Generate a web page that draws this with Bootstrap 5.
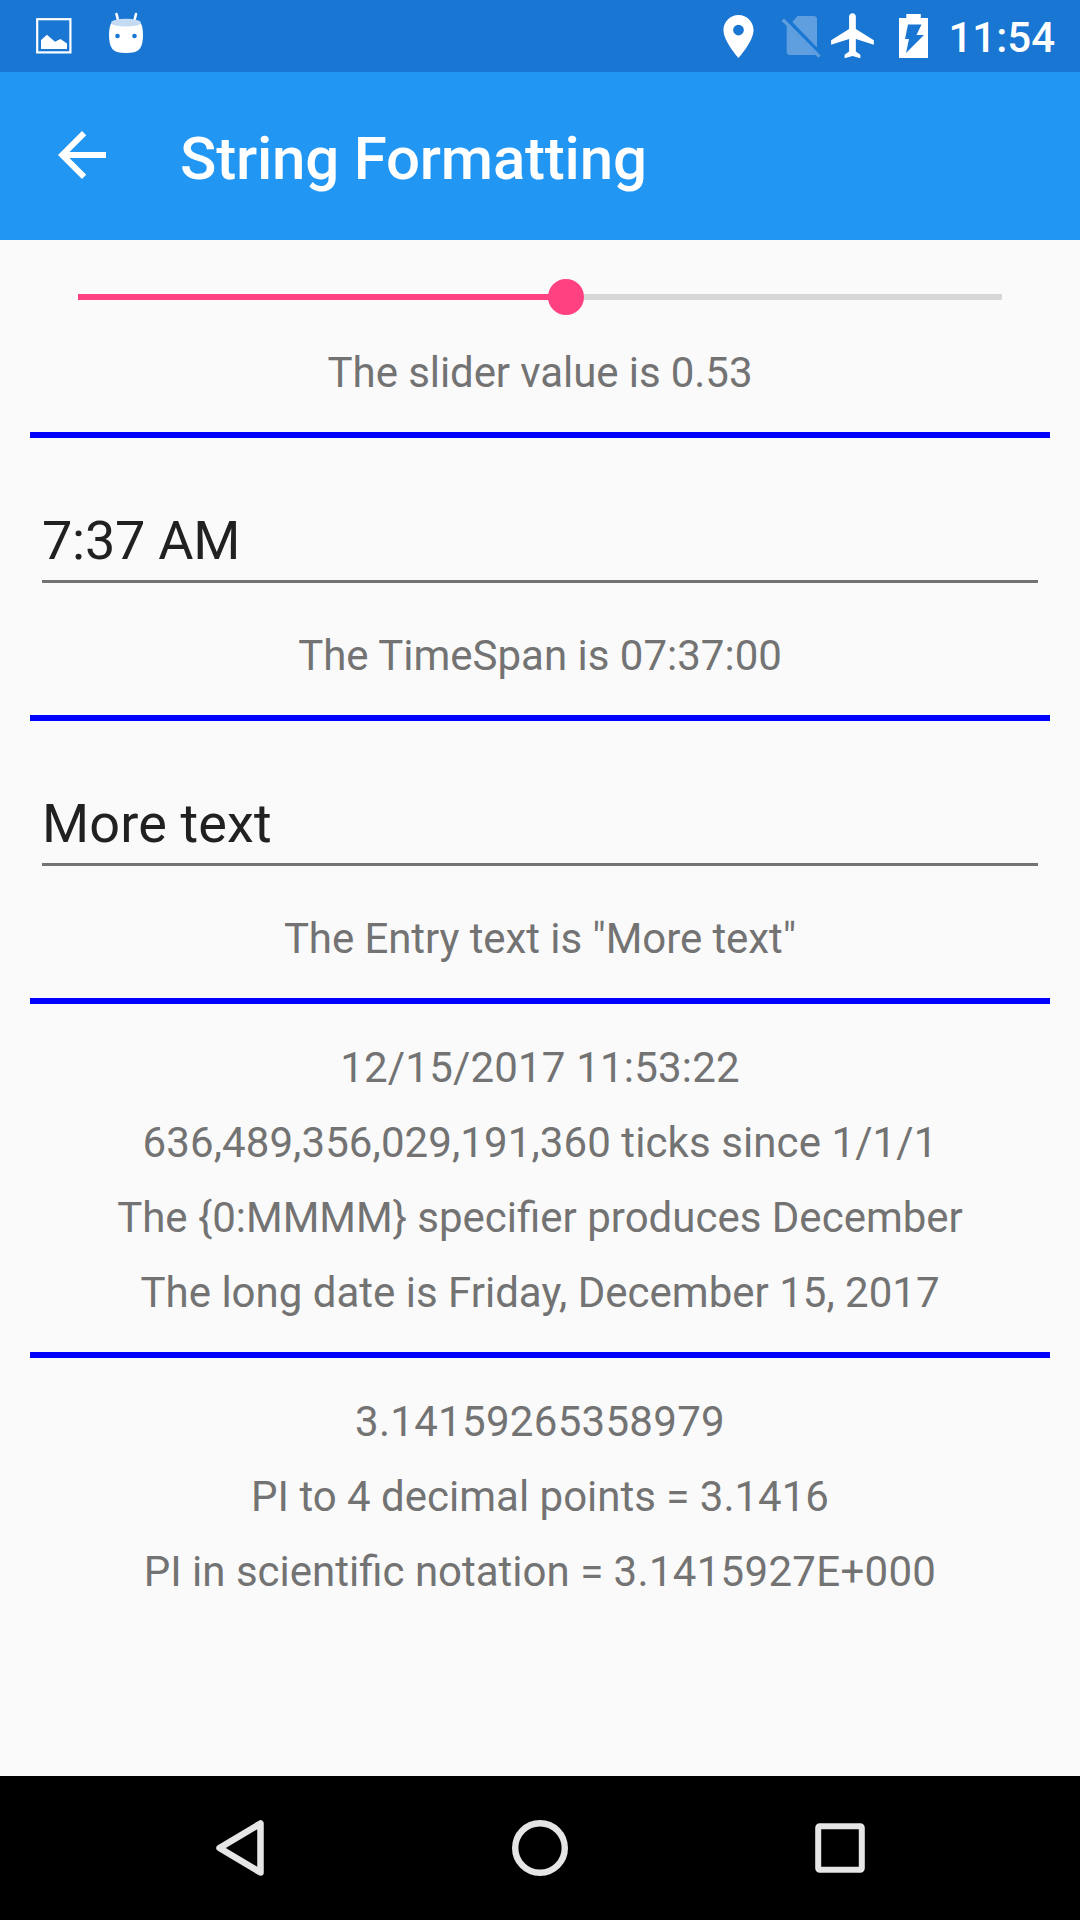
<!DOCTYPE html>
<html lang="en">
<head>
<meta charset="utf-8">
<meta name="viewport" content="width=device-width, initial-scale=1">
<title>String Formatting</title>
<link href="https://cdn.jsdelivr.net/npm/bootstrap@5.3.0/dist/css/bootstrap.min.css" rel="stylesheet">
<style>
  body { font-family: Roboto, "Noto Sans", sans-serif; background: #fafafa; color: #737373; }
  svg { display: block; flex: none; }
  .screen { height: 1920px; width: 1080px; overflow: hidden; }
  .status-bar { height: 72px; background: #1976d2; padding: 0 25px 0 36px; }
  .status-icons { gap: 36px; }
  .clock { font-size: 42px; font-weight: 500; line-height: 49px; padding-top: 3px; margin-left: 20px; }
  .app-bar { height: 168px; background: #2196f3; padding: 0 46px; }
  .app-bar svg { margin-bottom: 2px; }
  .app-title { font-size: 60px; font-weight: 500; line-height: 70px; padding-top: 5px; margin-left: 62px; letter-spacing: -.2px; }
  .page-body { padding: 0 30px; }
  .slider-row { height: 95px; padding: 54px 48px 0; }
  .slider-track { height: 6px; background: #d7d7d7; border-radius: 0; overflow: visible; }
  .slider-track .progress-bar { background: #ff4081; }
  .slider-thumb { width: 36px; height: 36px; background: #ff4081; }
  .info-text { font-size: 42px; line-height: 75px; text-align: center; white-space: nowrap; }
  .tight { letter-spacing: -.08px; }
  .roomy { letter-spacing: .09px; }
  .roomy-date { letter-spacing: .19px; }
  .roomy-digits { letter-spacing: .3px; }
  .rule { height: 6px; background: #0000ff; margin: 22px 0 26px; }
  .field-row { padding: 44px 12px 35px; }
  .rule + .field-row { margin-top: -26px; padding-top: 70px; }
  .field-row .form-control { height: 75px; padding: 0 0 8px; border: 0; border-bottom: 3px solid #737373; border-radius: 0;
    background: transparent; color: #212121; font-size: 54px; line-height: 64px; }
  .field-time { letter-spacing: -.25px; }
  .field-entry { letter-spacing: .15px; }
  .nav-keys { height: 144px; background: #000; padding: 0 90px; }
</style>
</head>
<body>
<div class="screen d-flex flex-column">
  <div class="status-bar d-flex align-items-center justify-content-between text-white">
    <div class="status-icons d-flex align-items-center">
      <svg width="36" height="72" viewBox="36 0 36 72"><rect x="37.2" y="19.2" width="33.2" height="33.2" fill="none" stroke="#fff" stroke-width="2.2"/><path fill="#fff" d="M41 40l6-5.2 8 7 5.500-2.800 6.500 4.500V49H41z"/></svg>
      <svg width="36" height="72" viewBox="108 0 36 72"><path d="M116.500 14l2 8M136 14l-2 8" stroke="#fff" stroke-width="2.600" stroke-linecap="round"/><path fill="#fff" d="M111 23.500q-2 4-2 11.500 0 9 3 13.500 3 4.500 14 4.500t14-4.500q3-4.500 3-13.500 0-7.500-2-11.500z"/><ellipse cx="126" cy="22.700" rx="15" ry="3.900" fill="#c5dbf3"/><circle cx="117.500" cy="36" r="2.300" fill="#1976d2"/><circle cx="134.500" cy="36" r="2.300" fill="#1976d2"/></svg>
    </div>
    <div class="d-flex align-items-center">
      <svg width="60" height="72" viewBox="722 0 60 72"><g transform="translate(712.700 10.700) scale(2.150)"><path fill="#fff" d="M12 2C8.130 2 5 5.130 5 9c0 5.250 7 13 7 13s7-7.750 7-13c0-3.870-3.130-7-7-7zm0 9.500a2.500 2.500 0 1 1 0-5 2.500 2.500 0 0 1 0 5z"/></g></svg>
      <svg width="46" height="72" viewBox="782 0 46 72"><path fill="#5f9fe0" d="M797.500 16h16q3.500 0 3.500 3.500V47.500L792.300 22zM786.700 25.500l28.800 29q-1 .5-2 .5h-23.300q-3.500 0-3.500-3.500z"/><path d="M782.800 19.700L819.500 56.700" stroke="#5f9fe0" stroke-width="3.300"/></svg>
      <svg width="56" height="72" viewBox="828 0 56 72"><path transform="translate(826.600 8.700) scale(2.250)" fill="#fff" d="M21 16v-2l-8-5V3.500c0-.83-.67-1.500-1.500-1.500S10 2.670 10 3.500V9l-8 5v2l8-2.500V19l-2 1.500V22l3.500-1 3.500 1v-1.500L13 19v-5.500l8 2.500z"/></svg>
      <svg width="44" height="72" viewBox="884 0 44 72"><path fill="#fff" d="M899 18h7.300v-4h14.500v4H928v40h-29z"/><path fill="#1976d2" d="M908 24.500h13.500l-5 10.500h7.500L906 53l3-14h-4z"/></svg>
      <div class="clock">11:54</div>
    </div>
  </div>

  <header class="app-bar d-flex align-items-center text-white">
    <svg width="72" height="72" viewBox="0 0 24 24"><path fill="#fff" d="M20 11H7.830l5.590-5.590L12 4l-8 8 8 8 1.410-1.410L7.830 13H20v-2z"/></svg>
    <div class="app-title">String Formatting</div>
  </header>

  <main class="page-body flex-grow-1">
    <div class="slider-row">
      <div class="slider-track progress position-relative">
        <div class="progress-bar" style="width:52.8%"></div>
        <div class="slider-thumb position-absolute top-50 translate-middle rounded-circle" style="left:52.8%"></div>
      </div>
    </div>
    <div class="info-text tight">The slider value is 0.53</div>
    <div class="rule"></div>

    <div class="field-row"><input class="form-control field-time" type="text" value="7:37 AM" aria-label="Time"></div>
    <div class="info-text">The TimeSpan is 07:37:00</div>
    <div class="rule"></div>

    <div class="field-row"><input class="form-control field-entry" type="text" value="More text" aria-label="Entry"></div>
    <div class="info-text tight">The Entry text is "More text"</div>
    <div class="rule"></div>

    <div class="info-text roomy-date">12/15/2017 11:53:22</div>
    <div class="info-text roomy">636,489,356,029,191,360 ticks since 1/1/1</div>
    <div class="info-text">The {0:MMMM} specifier produces December</div>
    <div class="info-text">The long date is Friday, December 15, 2017</div>
    <div class="rule"></div>

    <div class="info-text roomy-digits">3.14159265358979</div>
    <div class="info-text">PI to 4 decimal points = 3.1416</div>
    <div class="info-text">PI in scientific notation = <span class="roomy-digits">3.1415927E+000</span></div>
  </main>

  <nav class="nav-keys d-flex align-items-center">
    <div class="flex-fill d-flex justify-content-center"><svg width="60" height="60" viewBox="210 1818 60 60"><path d="M219.500 1848L260.500 1823.500V1872.500z" fill="none" stroke="#e6e6e6" stroke-width="6.500" stroke-linejoin="round"/></svg></div>
    <div class="flex-fill d-flex justify-content-center"><svg width="60" height="60" viewBox="0 0 60 60"><circle cx="30" cy="30" r="24.800" fill="none" stroke="#e6e6e6" stroke-width="6.400"/></svg></div>
    <div class="flex-fill d-flex justify-content-center"><svg width="60" height="60" viewBox="0 0 60 60"><rect x="8.200" y="8.200" width="43.600" height="43.600" rx="1.500" fill="none" stroke="#e6e6e6" stroke-width="6"/></svg></div>
  </nav>
</div>
<script src="https://cdn.jsdelivr.net/npm/bootstrap@5.3.0/dist/js/bootstrap.bundle.min.js"></script>
</body>
</html>
